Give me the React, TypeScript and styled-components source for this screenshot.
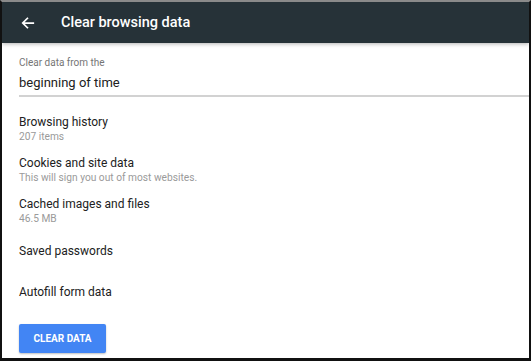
import styled, { createGlobalStyle } from 'styled-components';

const GlobalStyle = createGlobalStyle`
  html, body {
    margin: 0;
    padding: 0;
    background: #ffffff;
  }
  body {
    font-family: Roboto, 'Liberation Sans', sans-serif;
  }
`;

const items = [
  { title: 'Browsing history', detail: '207 items' },
  { title: 'Cookies and site data', detail: 'This will sign you out of most websites.' },
  { title: 'Cached images and files', detail: '46.5 MB' },
  { title: 'Saved passwords' },
  { title: 'Autofill form data' },
];

function BackArrow(): JSX.Element {
  return (
    <svg width="14" height="14" viewBox="0 0 16 16" aria-hidden="true">
      <path d="M15 8H2.5M8 2L2 8l6 6" fill="none" stroke="#ffffff" strokeWidth="2" />
    </svg>
  );
}

export default function App(): JSX.Element {
  return (
    <>
      <GlobalStyle />
      <Frame>
        <Header>
          <BackButton>
            <BackArrow />
          </BackButton>
          <Title>Clear browsing data</Title>
        </Header>
        <Body>
          <RangeField>
            <RangeLabel>Clear data from the</RangeLabel>
            <RangeValue>beginning of time</RangeValue>
          </RangeField>
          <List>
            {items.map((item) => (
              <Row key={item.title}>
                <RowTitle>{item.title}</RowTitle>
                {item.detail && <RowDetail>{item.detail}</RowDetail>}
              </Row>
            ))}
          </List>
          <ClearButton>CLEAR DATA</ClearButton>
        </Body>
      </Frame>
    </>
  );
}

const Frame = styled.div`
  box-sizing: border-box;
  width: 531px;
  height: 361px;
  overflow: hidden;
  border-style: solid;
  border-color: #8a8a8a #111111 #111111 #111111;
  border-width: 2px 2px 3px 2px;
  background: #ffffff;
  display: flex;
  flex-direction: column;
`;

const Header = styled.header`
  height: 41px;
  flex: none;
  background: #263238;
  display: flex;
  align-items: center;
  box-shadow: 0 1px 4px rgba(0, 0, 0, 0.3);
  position: relative;
  z-index: 1;
`;

const BackButton = styled.div`
  width: 14px;
  height: 14px;
  margin-left: 19px;
  margin-right: 26px;
  display: flex;
`;

const Title = styled.h1`
  margin: 0;
  color: #ffffff;
  font-size: 14.5px;
  font-weight: 500;
`;

const Body = styled.div`
  display: flex;
  flex-direction: column;
  padding: 13px 0 0 17px;
`;

const RangeField = styled.div`
  display: flex;
  flex-direction: column;
  border-bottom: 2px solid #d2d2d2;
  padding-bottom: 3px;
`;

const RangeLabel = styled.div`
  color: #757575;
  font-size: 10px;
  line-height: 14px;
`;

const RangeValue = styled.div`
  color: #212121;
  font-size: 13px;
  line-height: 18px;
  margin-top: 4px;
`;

const List = styled.div`
  display: flex;
  flex-direction: column;
  margin-top: 11px;
`;

const Row = styled.div`
  height: 41px;
  display: flex;
  flex-direction: column;
  justify-content: center;
`;

const RowTitle = styled.div`
  color: #212121;
  font-size: 12px;
  line-height: 15px;
`;

const RowDetail = styled.div`
  color: #9a9a9a;
  font-size: 10.2px;
  line-height: 13px;
`;

const ClearButton = styled.button`
  align-self: flex-start;
  margin-top: 11px;
  width: 87px;
  height: 29px;
  border: none;
  border-radius: 2px;
  background: #4285f4;
  color: #ffffff;
  font-family: Roboto, 'Liberation Sans', sans-serif;
  font-size: 10px;
  font-weight: 700;
  box-shadow: 0 1px 2px rgba(0, 0, 0, 0.25);
  padding: 0;
`;
